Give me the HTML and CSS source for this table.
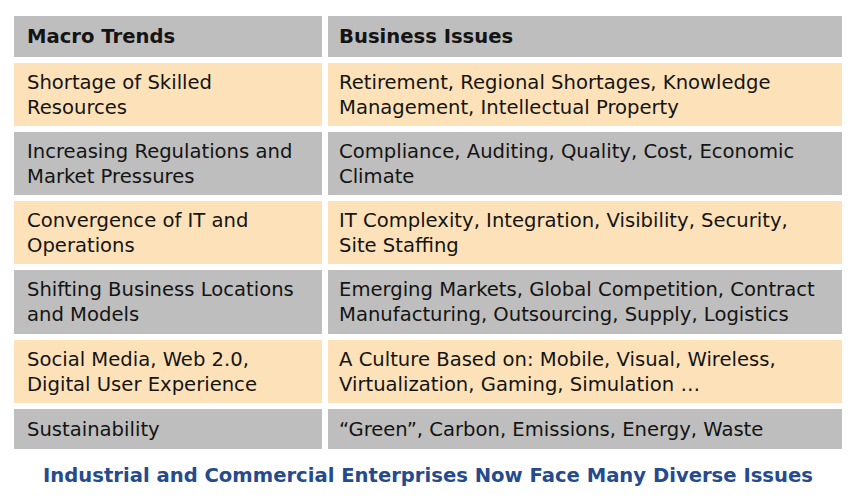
FILE: index.html
```html
<!DOCTYPE html>
<html lang="en">
<head>
<meta charset="utf-8">
<title>Macro Trends and Business Issues</title>
<link rel="stylesheet" href="styles.css">
</head>
<body>
<div class="page">
  <div class="grid">
    <div class="cell head first">Macro Trends</div>
    <div class="cell head second">Business Issues</div>

    <div class="cell peach first">Shortage of Skilled<br>Resources</div>
    <div class="cell peach second">Retirement, Regional Shortages, Knowledge<br>Management, Intellectual Property</div>

    <div class="cell gray first">Increasing Regulations and<br>Market Pressures</div>
    <div class="cell gray second">Compliance, Auditing, Quality, Cost, Economic<br>Climate</div>

    <div class="cell peach first">Convergence of IT and<br>Operations</div>
    <div class="cell peach second">IT Complexity, Integration, Visibility, Security,<br>Site Staffing</div>

    <div class="cell gray first">Shifting Business Locations<br>and Models</div>
    <div class="cell gray second">Emerging Markets, Global Competition, Contract<br>Manufacturing, Outsourcing, Supply, Logistics</div>

    <div class="cell peach first">Social Media, Web 2.0,<br>Digital User Experience</div>
    <div class="cell peach second">A Culture Based on: Mobile, Visual, Wireless,<br>Virtualization, Gaming, Simulation …</div>

    <div class="cell gray first single">Sustainability</div>
    <div class="cell gray second single">“Green”, Carbon, Emissions, Energy, Waste</div>
  </div>
  <p class="caption">Industrial and Commercial Enterprises Now Face Many Diverse Issues</p>
</div>
</body>
</html>
```

FILE: styles.css
```css
html, body {
  margin: 0;
  padding: 0;
  background: #ffffff;
}

.page {
  width: 860px;
  height: 500px;
  padding: 16px 18px 0 14px;
  box-sizing: border-box;
  font-family: "DejaVu Sans", Verdana, sans-serif;
  color: #141414;
}

.grid {
  display: grid;
  grid-template-columns: 308px 514px;
  grid-template-rows: 41px 63px 63px 63px 64px 63px 40px;
  column-gap: 6px;
  row-gap: 6px;
}

.cell {
  font-size: 19.6px;
  line-height: 25px;
  padding: 7px 8px 6px 13px;
  box-sizing: border-box;
  white-space: nowrap;
}

.cell.second {
  padding-left: 11px;
}

.head {
  background: #bebebe;
  font-weight: bold;
  padding-top: 8px;
  padding-bottom: 8px;
}

.single {
  padding-top: 8px;
  padding-bottom: 7px;
}

.peach {
  background: #fde2b9;
}

.gray {
  background: #bebebe;
}

.caption {
  margin: 15px 0 0 0;
  text-align: center;
  font-size: 19.6px;
  line-height: 24px;
  font-weight: bold;
  color: #254b8e;
}
```
